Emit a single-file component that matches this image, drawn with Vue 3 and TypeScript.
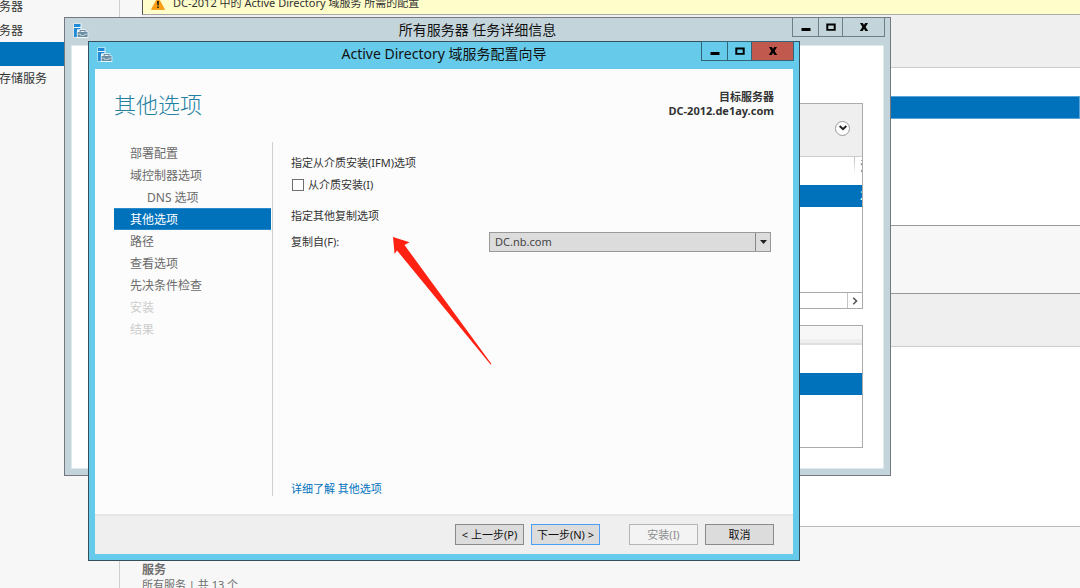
<script setup lang="ts">
import { ref } from 'vue'

interface Step {
  label: string
  state?: 'active' | 'disabled'
  nested?: boolean
}

const steps: Step[] = [
  { label: '部署配置' },
  { label: '域控制器选项' },
  { label: 'DNS 选项', nested: true },
  { label: '其他选项', state: 'active' },
  { label: '路径' },
  { label: '查看选项' },
  { label: '先决条件检查' },
  { label: '安装', state: 'disabled' },
  { label: '结果', state: 'disabled' },
]

const sideItems = [
  { label: '务器', active: false },
  { label: '务器', active: false },
  { label: '', active: true },
  { label: '存储服务', active: false },
]

const installFromMedia = ref(false)
const source = ref('DC.nb.com')
</script>

<template>
  <div class="desktop">
    <div class="manager">
      <nav class="side">
        <div v-for="(item, i) in sideItems" :key="i" class="side-item" :class="{ active: item.active }">{{ item.label }}</div>
      </nav>
      <main class="main">
        <div class="banner">
          <svg width="14" height="13" viewBox="0 0 14 13" aria-hidden="true">
            <path d="M7 0.5 L13.6 12.5 H0.4 Z" fill="#ff9d12" stroke="#f08a00" stroke-width="0.6" />
            <path d="M6 4 H8 L7.7 8.6 H6.3 Z M6.2 9.4 H7.8 V11.1 H6.2 Z" fill="#222" />
          </svg>
          <span>DC-2012 中的 Active Directory 域服务 所需的配置</span>
        </div>
        <div class="tile-head"></div>
        <div class="tile-list"><div class="tile-selected"></div></div>
        <div class="tile-gap"></div>
        <div class="tile-head"></div>
        <div class="tile-blank"></div>
        <div class="services">
          <strong>服务</strong>
          <span>所有服务 | 共 13 个</span>
        </div>
      </main>
    </div>

    <section class="window tasks">
      <header class="titlebar">
        <svg class="app-icon" width="16" height="16" viewBox="0 0 16 16" aria-hidden="true">
          <rect x="0.5" y="0.5" width="8" height="14" fill="#f2f8fb" />
          <rect x="1" y="1" width="6.5" height="3" fill="#1f8ad8" />
          <rect x="1" y="5" width="3" height="9" fill="#1f8ad8" />
          <rect x="4" y="5" width="3.5" height="1.4" fill="#1f8ad8" />
          <path d="M3.8 15 V8.4 H6 V6.2 H13 V8.4 H15.3 V15 Z" fill="#f2f8fb" />
          <path d="M7.2 9 V7.5 H12 V9" fill="none" stroke="#6c8ea3" stroke-width="1.1" />
          <rect x="4.6" y="9" width="10" height="5" rx="0.6" fill="#6c8ea3" />
          <path d="M4.6 11.2 H7.5 V12.4 H11.7 V11.2 H14.6" fill="none" stroke="#f2f8fb" stroke-width="0.6" />
        </svg>
        <h2>所有服务器 任务详细信息</h2>
        <div class="controls">
          <button type="button" class="min" aria-label="最小化"><svg width="10" height="10" viewBox="0 0 10 10"><path d="M0.5 6 H9.5 V9 H0.5 Z" /></svg></button>
          <button type="button" class="max" aria-label="最大化"><svg width="10" height="10" viewBox="0 0 10 10"><path fill-rule="evenodd" d="M0.3 1.4 H9.7 V8.8 H0.3 Z M2.3 3.5 V7 H7.7 V3.5 Z" /></svg></button>
          <button type="button" class="close" aria-label="关闭"><svg width="10" height="10" viewBox="0 0 10 10"><path d="M1 1 H3.8 L5 3 L6.2 1 H9 L6.6 4.9 L9.2 9 H6.3 L5 6.8 L3.7 9 H0.8 L3.4 4.9 Z" /></svg></button>
        </div>
      </header>
      <div class="tasks-body">
        <div class="panel">
          <div class="panel-head">
            <button type="button" class="round" aria-label="展开"><svg width="8" height="6" viewBox="0 0 8 6"><path d="M0.7 1 L4 4.2 L7.3 1" fill="none" stroke="#222" stroke-width="2" /></svg></button>
          </div>
          <table class="grid">
            <thead><tr><th class="wide"></th><th class="last">注</th></tr></thead>
            <tbody><tr><td class="wide"></td><td class="last">2</td></tr></tbody>
          </table>
          <div class="scroll">
            <button type="button" aria-label="向右滚动"><svg width="6" height="8" viewBox="0 0 6 8"><path d="M1.2 0.8 L4.5 4 L1.2 7.2" fill="none" stroke="#555" stroke-width="1.6" /></svg></button>
          </div>
        </div>
        <div class="panel second">
          <div class="second-head"></div>
          <div class="second-row"></div>
        </div>
      </div>
    </section>

    <section class="window wizard">
      <header class="titlebar">
        <svg class="app-icon" width="16" height="16" viewBox="0 0 16 16" aria-hidden="true">
          <rect x="0.5" y="0.5" width="8" height="14" fill="#e6f6fc" />
          <rect x="1" y="1" width="6.5" height="3" fill="#1f8ad8" />
          <rect x="1" y="5" width="3" height="9" fill="#1f8ad8" />
          <rect x="4" y="5" width="3.5" height="1.4" fill="#1f8ad8" />
          <path d="M3.8 15 V8.4 H6 V6.2 H13 V8.4 H15.3 V15 Z" fill="#e6f6fc" />
          <path d="M7.2 9 V7.5 H12 V9" fill="none" stroke="#6c8ea3" stroke-width="1.1" />
          <rect x="4.6" y="9" width="10" height="5" rx="0.6" fill="#6c8ea3" />
          <path d="M4.6 11.2 H7.5 V12.4 H11.7 V11.2 H14.6" fill="none" stroke="#e6f6fc" stroke-width="0.6" />
        </svg>
        <h2>Active Directory 域服务配置向导</h2>
        <div class="controls">
          <button type="button" class="min" aria-label="最小化"><svg width="10" height="10" viewBox="0 0 10 10"><path d="M0.5 6 H9.5 V9 H0.5 Z" /></svg></button>
          <button type="button" class="max" aria-label="最大化"><svg width="10" height="10" viewBox="0 0 10 10"><path fill-rule="evenodd" d="M0.3 1.4 H9.7 V8.8 H0.3 Z M2.3 3.5 V7 H7.7 V3.5 Z" /></svg></button>
          <button type="button" class="close" aria-label="关闭"><svg width="10" height="10" viewBox="0 0 10 10"><path d="M1 1 H3.8 L5 3 L6.2 1 H9 L6.6 4.9 L9.2 9 H6.3 L5 6.8 L3.7 9 H0.8 L3.4 4.9 Z" /></svg></button>
        </div>
      </header>

      <div class="wizard-body">
        <div class="wizard-top">
          <h1>其他选项</h1>
          <div class="target">
            <p>目标服务器</p>
            <p>DC-2012.de1ay.com</p>
          </div>
        </div>
        <div class="columns">
          <nav class="steps">
            <div v-for="step in steps" :key="step.label" class="step" :class="[step.state, { nested: step.nested }]">{{ step.label }}</div>
          </nav>
          <div class="options">
            <p>指定从介质安装(IFM)选项</p>
            <label class="check"><input v-model="installFromMedia" type="checkbox" />从介质安装(I)</label>
            <p class="second-title">指定其他复制选项</p>
            <div class="field">
              <label for="source">复制自(F):</label>
              <div class="select">
                <select id="source" v-model="source"><option>DC.nb.com</option></select>
                <span class="drop"><svg width="7" height="4" viewBox="0 0 7 4"><path d="M0 0 H7 L3.5 4 Z" fill="#222" /></svg></span>
              </div>
            </div>
            <a href="#" class="more">详细了解 其他选项</a>
          </div>
        </div>
        <footer class="actions">
          <button type="button">&lt; 上一步(P)</button>
          <button type="button" class="primary">下一步(N) &gt;</button>
          <button type="button" class="install" disabled>安装(I)</button>
          <button type="button">取消</button>
        </footer>
      </div>
      <svg class="pointer" width="100" height="130" viewBox="0 0 100 130" aria-hidden="true">
        <path d="M1 1 L17.5 6.2 L12.5 9 L99.5 128 L98.6 128.6 L5 14.5 L2.6 18 Z" fill="#ff2112" />
      </svg>
    </section>
  </div>
</template>

<style>
body {
  margin: 0;
}
</style>

<style scoped>
* {
  box-sizing: border-box;
}
.desktop {
  position: relative;
  height: 100vh;
  overflow: hidden;
  background: #f7f7f7;
  font-family: "Noto Sans", "Noto Sans CJK SC", sans-serif;
  font-size: 12px;
  line-height: 16px;
  color: #333;
}
h1, h2, p {
  margin: 0;
  font-weight: 400;
}
button {
  padding: 0;
  font: inherit;
  color: inherit;
}
.manager {
  display: flex;
  min-height: 600px;
  margin-top: -8px;
}
.side {
  flex: 0 0 120px;
  padding-top: 2px;
  border-right: 1px solid #cfcfcf;
}
.side-item {
  height: 24px;
  line-height: 26px;
  text-indent: -1px;
}
.side-item.active {
  background: #0072bc;
}
.main {
  flex: 1;
  margin-left: 22px;
}
.banner {
  display: flex;
  align-items: center;
  gap: 8px;
  height: 23px;
  padding-left: 8px;
  border-left: 1px solid #555;
  border-bottom: 1px solid #aaa;
  background: #fffdc9;
  font-size: 11px;
}
.tile-head {
  height: 53px;
  background: #efefef;
  border-bottom: 1px solid #ccc;
}
.tile-list {
  height: 158px;
  padding-top: 28px;
  background: #fff;
  border-bottom: 1px solid #999;
}
.tile-selected {
  height: 23px;
  background: #0072bc;
  border: 1px solid #5ba5d6;
}
.tile-gap {
  height: 68px;
  border-bottom: 1px solid #999;
}
.tile-blank {
  height: 180px;
  background: #fff;
  border-bottom: 1px solid #bbb;
}
.services {
  display: flex;
  flex-direction: column;
  padding-top: 35px;
  font-size: 11px;
  color: #6e6e6e;
}
.services strong {
  font-size: 12px;
  line-height: 15px;
}

.window {
  position: absolute;
  padding: 0 6px 6px;
  border: 1px solid;
}
.tasks {
  top: 17px;
  left: 64px;
  right: 189px;
  background: #c3d5db;
  border-color: #75797f;
}
.wizard {
  top: 41px;
  left: 88px;
  right: 280px;
  background: #66cbea;
  border-color: #35505c;
}
.titlebar {
  position: relative;
  height: 27px;
  display: flex;
  justify-content: center;
  align-items: flex-start;
}
.titlebar h2 {
  padding-top: 2px;
  font-size: 14px;
  line-height: 20px;
  color: #111;
}
.app-icon {
  position: absolute;
  left: 2px;
  top: 5px;
}
.controls {
  position: absolute;
  top: -1px;
  right: -1px;
  display: flex;
}
.controls button {
  display: flex;
  align-items: center;
  justify-content: center;
  height: 20px;
  border: 1px solid #6f7f87;
  border-right-width: 0;
  background: transparent;
}
.wizard .controls button {
  border-color: #2f6479;
}
.controls .min {
  width: 26px;
}
.controls .max {
  width: 24px;
}
.controls .close,
.wizard .controls .close {
  width: 43px;
  border-right-width: 1px;
}
.wizard .controls .close {
  background: #c1594f;
}

.tasks-body {
  padding: 57px 20px 20px 24px;
  background: #fff;
  border: 1px solid #dfe9ec;
}
.panel {
  border: 1px solid #ababab;
  overflow: hidden;
}
.panel-head {
  display: flex;
  justify-content: flex-end;
  align-items: center;
  height: 53px;
  padding-right: 12px;
  background: #efefef;
  border-bottom: 1px solid #ccc;
}
.round {
  display: flex;
  align-items: center;
  justify-content: center;
  width: 15px;
  height: 15px;
  margin-bottom: 4px;
  border: 1px solid #999;
  border-radius: 50%;
  background: #fff;
}
.grid {
  width: 100%;
  table-layout: fixed;
  border-collapse: collapse;
}
.grid th,
.grid td {
  padding: 0;
  overflow: hidden;
  white-space: nowrap;
  font-weight: 400;
}
.grid th {
  height: 28px;
  line-height: 20px;
  vertical-align: top;
  color: #3b6ea5;
}
.grid td {
  height: 22px;
  line-height: 20px;
  background: #0072bc;
  color: #fff;
}
.grid .last {
  width: 8px;
  text-align: left;
  text-indent: 6px;
}
.grid th.last {
  background: linear-gradient(#bbb, #fff) no-repeat 0 0 / 1px 17px;
}
.scroll {
  display: flex;
  justify-content: flex-end;
  height: 16px;
  margin-top: 85px;
  border-top: 1px solid #ababab;
}
.scroll button {
  display: flex;
  align-items: center;
  justify-content: center;
  width: 15px;
  border: 0;
  border-left: 1px solid #c4c4c4;
  background: #fff;
}
.second {
  height: 123px;
  margin-top: 16px;
}
.second-head {
  height: 19px;
  background: linear-gradient(#f7f7f7 13px, #efefef 13px);
  border-bottom: 2px solid #dfdfdf;
}
.second-row {
  height: 22px;
  margin-top: 28px;
  background: #0072bc;
}

.wizard-body {
  background: #fcfcfc;
}
.wizard-top {
  display: flex;
  justify-content: space-between;
  align-items: flex-start;
  height: 73px;
  padding: 19px 19px 0;
}
.wizard-top h1 {
  font-size: 22px;
  line-height: 32px;
  font-weight: 300;
  color: #23809f;
}
.target {
  padding-top: 2px;
  text-align: right;
  font-size: 11px;
  line-height: 14px;
}
.target p {
  font-weight: 700;
}
.columns {
  display: flex;
  height: 354px;
  margin: 0 22px 0 19px;
}
.steps {
  flex: 0 0 159px;
  padding-right: 1px;
  border-right: 1px solid #d0d0d0;
}
.step {
  height: 22px;
  padding-left: 16px;
  line-height: 23px;
  color: #6a6a6a;
}
.step.nested {
  padding-left: 33px;
}
.step.active {
  background: #0072bc;
  border: 1px solid #2b8acb;
  border-width: 1px 0;
  line-height: 21px;
  color: #fff;
}
.step.disabled {
  color: #ccc;
}
.options {
  flex: 1;
  display: flex;
  flex-direction: column;
  padding: 13px 0 0 18px;
  font-size: 11px;
}
.check {
  display: flex;
  align-items: center;
  gap: 4px;
  margin-top: 6px;
}
.check input {
  appearance: none;
  width: 12px;
  height: 12px;
  margin: 0 0 0 1px;
  border: 1px solid #707070;
  background: #fff;
}
.second-title {
  margin-top: 15px;
}
.field {
  display: flex;
  align-items: center;
  margin-top: 8px;
}
.field label {
  flex: 0 0 198px;
}
.select {
  position: relative;
  flex: 1;
}
.select select {
  appearance: none;
  display: block;
  width: 100%;
  height: 20px;
  padding: 0 20px 0 5px;
  border: 1px solid #999;
  border-radius: 0;
  background: #dcdcdc;
  font: inherit;
  color: #444;
}
.drop {
  position: absolute;
  top: 1px;
  right: 1px;
  bottom: 1px;
  width: 15px;
  display: flex;
  align-items: center;
  justify-content: center;
  border-left: 1px solid #888;
  pointer-events: none;
}
.more {
  align-self: flex-start;
  margin-top: auto;
  line-height: 14px;
  color: #0072bc;
  text-decoration: none;
}
.actions {
  display: flex;
  justify-content: flex-end;
  gap: 7px;
  margin-top: 18px;
  padding: 8px 19px 9px;
  border-top: 2px solid #e6e6e6;
  background: #efefef;
}
.actions button {
  width: 69px;
  height: 21px;
  border: 1px solid #8a8a8a;
  background: #dcdcdc;
  font-size: 11px;
  line-height: 19px;
  color: #111;
}
.actions .primary {
  border-color: #4b9ef5;
}
.actions .install {
  margin-left: 22px;
  border-color: #b5b5b5;
  background: #f3f3f3;
  color: #8d8d8d;
}
.pointer {
  position: absolute;
  left: 303px;
  top: 194px;
  pointer-events: none;
}
</style>
